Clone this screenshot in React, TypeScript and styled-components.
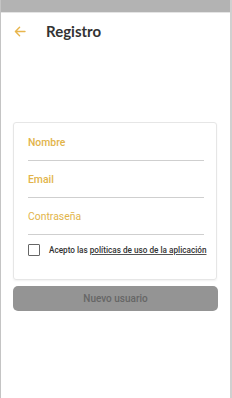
import React from "react";
import styled, { createGlobalStyle } from "styled-components";

const Global = createGlobalStyle`
  html, body { margin: 0; padding: 0; background: #ffffff; }
  * { box-sizing: border-box; }
`;

const Frame = styled.div`
  width: 232px;
  height: 398px;
  display: flex;
  flex-direction: column;
  border-left: 1px solid #c4c4c4;
  border-right: 2px solid #d0d0d0;
  background: #fff;
  font-family: Roboto, "Liberation Sans", sans-serif;
`;

const StatusBar = styled.div`
  height: 13px;
  background: #b3b3b3;
  border-bottom: 1px solid #e4e4e4;
  flex-shrink: 0;
`;

const Header = styled.div`
  display: flex;
  align-items: center;
  height: 36px;
  padding-left: 11px;
  gap: 18px;
`;

const BackButton = styled.button`
  border: none;
  background: none;
  padding: 0;
  width: 16px;
  height: 16px;
  display: flex;
  align-items: center;
  justify-content: center;
`;

const Title = styled.h1`
  margin: 0;
  font-family: Lato, "Open Sans", sans-serif;
  font-weight: 700;
  font-size: 15px;
  color: #333;
`;

const Body = styled.div`
  padding: 73px 13px 0 12px;
  display: flex;
  flex-direction: column;
  gap: 6px;
`;

const Card = styled.div`
  border: 1px solid #e6e6e6;
  border-radius: 3px;
  box-shadow: 0 1px 2px rgba(0,0,0,0.06);
  padding: 1px 12px 23px 14px;
  display: flex;
  flex-direction: column;
`;

const Field = styled.div`
  height: 37px;
  display: flex;
  flex-direction: column;
  justify-content: flex-end;
  border-bottom: 1px solid #cfcfcf;
`;

const Label = styled.label<{ $bold?: boolean }>`
  font-size: 10.4px;
  font-weight: ${p => (p.$bold ? 500 : 400)};
  color: #e2b44a;
  padding-bottom: 11px;
`;

const CheckRow = styled.div`
  display: flex;
  align-items: center;
  gap: 9px;
  margin-top: 9px;
`;

const Box = styled.span`
  width: 12px;
  height: 12px;
  border: 1.5px solid #666;
  border-radius: 1px;
  flex-shrink: 0;
`;

const CheckText = styled.span`
  font-size: 8.2px;
  font-weight: 500;
  color: #333;
  white-space: nowrap;
`;

const Link = styled.span`
  color: #333;
  text-decoration: underline;
  text-decoration-color: #555;
`;

const Submit = styled.button`
  height: 25px;
  border: none;
  border-radius: 5px;
  background: #949494;
  color: #666;
  font-family: Roboto, "Liberation Sans", sans-serif;
  font-size: 10px;
  font-weight: 500;
  margin-right: -1px;
`;

export default function App() {
  return (
    <>
      <Global />
      <Frame>
        <StatusBar />
        <Header>
          <BackButton aria-label="Volver">
            <svg width="12" height="11" viewBox="0 0 12 11" fill="none">
              <path d="M11 5.5H1.8M5.6 1.3L1.4 5.5L5.6 9.7" stroke="#e8b54c" strokeWidth="1.4" strokeLinecap="round" strokeLinejoin="round" />
            </svg>
          </BackButton>
          <Title>Registro</Title>
        </Header>
        <Body>
          <Card>
            <Field><Label $bold>Nombre</Label></Field>
            <Field><Label $bold>Email</Label></Field>
            <Field><Label>Contraseña</Label></Field>
            <CheckRow>
              <Box />
              <CheckText>
                Acepto las <Link>políticas de uso de la aplicación</Link>
              </CheckText>
            </CheckRow>
          </Card>
          <Submit>Nuevo usuario</Submit>
        </Body>
      </Frame>
    </>
  );
}
